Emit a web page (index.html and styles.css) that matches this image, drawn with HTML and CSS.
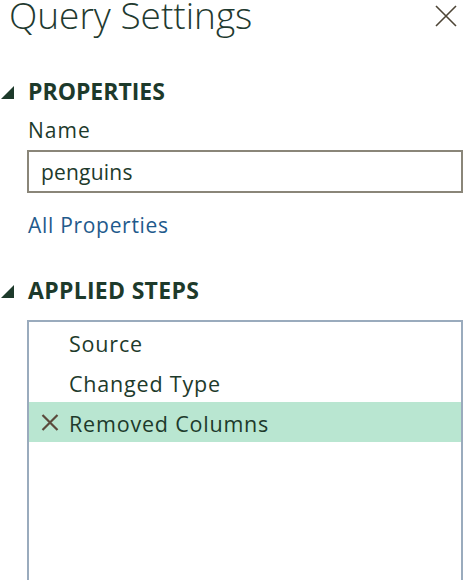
FILE: index.html
```html
<!DOCTYPE html>
<html>
<head>
<meta charset="utf-8">
<link rel="stylesheet" href="styles.css">
</head>
<body>
<div class="panel">
  <div class="header">
    <div class="title">Query Settings</div>
    <svg class="close" width="22" height="22" viewBox="0 0 22 22"><path d="M1 1 L21 21 M21 1 L1 21" stroke="#4d4536" stroke-width="1.6" fill="none"/></svg>
  </div>
  <div class="section-head">
    <svg class="tri" width="13" height="13" viewBox="0 0 13 13"><polygon points="13,0 13,13 0,13" fill="#1d3a2b"/></svg>
    <span>PROPERTIES</span>
  </div>
  <div class="section-body">
    <div class="label">Name</div>
    <div class="input">penguins</div>
    <div class="link">All Properties</div>
  </div>
  <div class="section-head steps-head">
    <svg class="tri" width="13" height="13" viewBox="0 0 13 13"><polygon points="13,0 13,13 0,13" fill="#1d3a2b"/></svg>
    <span>APPLIED STEPS</span>
  </div>
  <div class="steps">
    <div class="step"><span class="icon"></span><span class="step-name">Source</span></div>
    <div class="step"><span class="icon"></span><span class="step-name">Changed Type</span></div>
    <div class="step selected"><span class="icon"><svg width="18" height="17" viewBox="0 0 18 17"><path d="M1.5 1 L16.5 16 M16.5 1 L1.5 16" stroke="#5b4a3c" stroke-width="2.2" fill="none"/></svg></span><span class="step-name">Removed Columns</span></div>
  </div>
</div>
</body>
</html>
```

FILE: styles.css
```css
html, body {
  margin: 0;
  padding: 0;
  background: #ffffff;
}
.panel {
  width: 463px;
  height: 580px;
  overflow: hidden;
  font-family: "Open Sans", "Noto Sans", sans-serif;
  color: #1d3a2b;
}
.header {
  display: flex;
  justify-content: space-between;
  align-items: flex-start;
  height: 72px;
}
.title {
  font-size: 37px;
  font-weight: 300;
  line-height: 30px;
  padding-left: 9px;
  color: #1f3a30;
}
.close {
  margin-top: 5px;
  margin-right: 6px;
}
.section-head {
  display: flex;
  align-items: center;
  gap: 14px;
  height: 38px;
  padding-left: 1px;
  font-size: 23px;
  font-weight: 700;
  line-height: 38px;
  color: #1d3a2b;
}
.section-head .tri {
  margin-top: 2px;
}
.section-body {
  padding-left: 27px;
}
.label {
  font-size: 21px;
  line-height: 39px;
  padding-top: 1px;
  padding-left: 1px;
  letter-spacing: 1px;
}
.input {
  box-sizing: border-box;
  height: 43px;
  border: 2px solid #8a8679;
  font-size: 21px;
  line-height: 41px;
  padding-left: 12px;
  letter-spacing: 0.2px;
  color: #1d3a2b;
}
.link {
  font-size: 21px;
  line-height: 40px;
  padding-top: 12px;
  padding-left: 1px;
  letter-spacing: 0.7px;
  color: #1f5a8c;
}
.steps-head {
  margin-top: 26px;
  letter-spacing: 0.3px;
}
.steps {
  box-sizing: border-box;
  margin-left: 27px;
  margin-top: 11px;
  height: 300px;
  border: 2px solid #9aabbd;
}
.step {
  box-sizing: border-box;
  display: flex;
  height: 40px;
  padding-top: 3px;
  font-size: 21.5px;
  line-height: 37px;
  letter-spacing: 0.8px;
}
.step .icon {
  width: 40px;
  display: flex;
  align-items: center;
  justify-content: flex-end;
  height: 37px;
}
.step .icon svg {
  margin-right: 10px;
  margin-top: -3px;
}
.step.selected {
  background: #b9e6d1;
}
```
